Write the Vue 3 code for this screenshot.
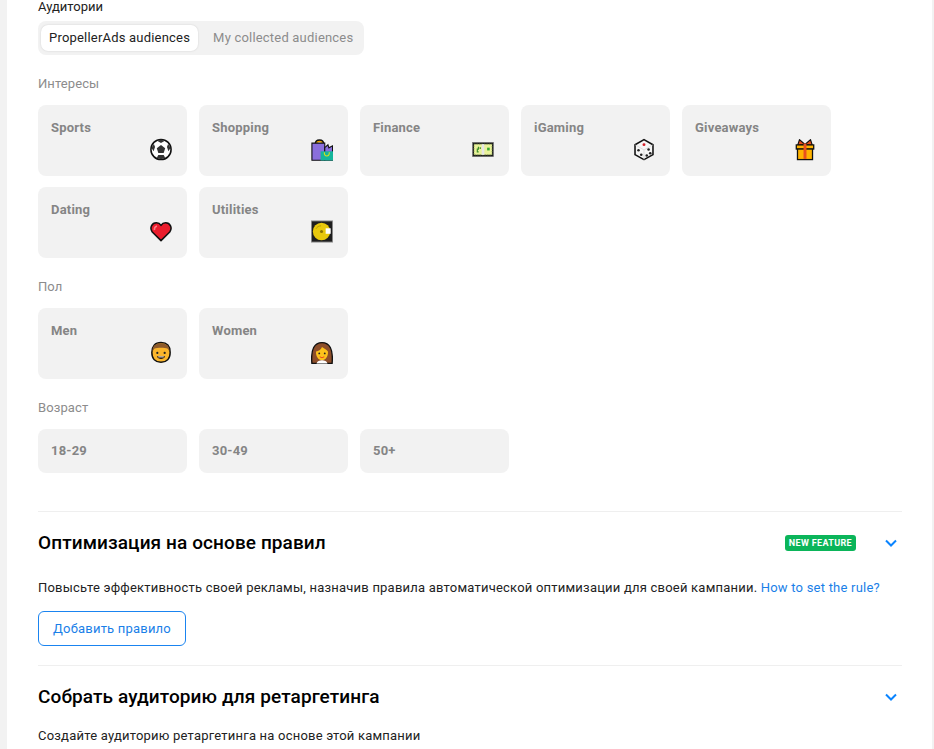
<script setup>
const groups = [
  {
    label: 'Интересы',
    items: [
      { name: 'Sports', icon: 'ball' },
      { name: 'Shopping', icon: 'bag' },
      { name: 'Finance', icon: 'money' },
      { name: 'iGaming', icon: 'dice' },
      { name: 'Giveaways', icon: 'gift' },
      { name: 'Dating', icon: 'heart' },
      { name: 'Utilities', icon: 'disc' },
    ],
  },
  {
    label: 'Пол',
    items: [
      { name: 'Men', icon: 'man' },
      { name: 'Women', icon: 'woman' },
    ],
  },
  {
    label: 'Возраст',
    items: [{ name: '18-29' }, { name: '30-49' }, { name: '50+' }],
  },
]
</script>

<template>
  <div class="page">
    <main class="panel">
      <div class="heading">Аудитории</div>
      <div class="tabs">
        <div class="tab active">PropellerAds audiences</div>
        <div class="tab">My collected audiences</div>
      </div>

      <template v-for="group in groups" :key="group.label">
        <div class="label">{{ group.label }}</div>
        <div class="grid">
          <div v-for="item in group.items" :key="item.name" class="card" :class="{ short: !item.icon }">
            <span class="card-name">{{ item.name }}</span>
            <svg v-if="item.icon" class="emoji" viewBox="0 0 24 24" aria-hidden="true">
              <template v-if="item.icon === 'ball'">
                <circle cx="12" cy="12" r="11" fill="#fff" stroke="#111" stroke-width="1.7" />
                <path d="M12 7.200l4.600 3.300-1.700 5.300H9.100l-1.700-5.300z" fill="#333" />
                <path d="M12 1.200l3.800 1.600L12 4.800 8.200 2.800zM1.500 10l2.800-4 1.200 3.200-1.600 4.800zM22.500 10l-2.800-4-1.200 3.200 1.600 4.800zM7.500 21l1.500-3h6l1.500 3-4.500 1.600z" fill="#333" />
              </template>
              <template v-else-if="item.icon === 'bag'">
                <path d="M5 6C5 .4 13.500 .4 13.500 6" fill="none" stroke="#111" stroke-width="2.200" />
                <path d="M6.200 5.500C6.200 2.300 12.300 2.300 12.300 5.500" fill="none" stroke="#f2a900" stroke-width="1.200" />
                <path d="M1 5h14v18.800H1z" fill="#8a6fdc" stroke="#111" stroke-width="1.200" />
                <path d="M15 10l3.500-3.200 1 3.400 4-2.200v15.800H15z" fill="#8a6fdc" stroke="#111" stroke-width="1.200" />
                <rect x="10.500" y="14" width="13.500" height="10" fill="#14b59b" />
                <path d="M14.500 15c0 5.500 5.500 5.500 5.500 0" fill="none" stroke="#d8e020" stroke-width="1.200" />
              </template>
              <template v-else-if="item.icon === 'money'">
                <rect x=".5" y="4.200" width="23" height="15.600" fill="#1c1c1c" stroke="#777" stroke-width=".6" />
                <rect x="2.200" y="6.200" width="19.600" height="11.600" fill="#e9f29a" />
                <rect x="2.200" y="6.200" width="19.600" height="11.600" fill="none" stroke="#7f9a55" stroke-width=".8" stroke-dasharray="1.500 1.200" />
                <rect x="10.600" y="6.200" width="2.800" height="11.600" fill="#e6e6e6" />
                <path d="M7 9v2.500H5.800v3h1.500M9 9.500v2" fill="none" stroke="#3d8f2a" stroke-width="1.300" />
                <rect x="16.500" y="10" width="2.800" height="3" fill="#35a92e" />
              </template>
              <template v-else-if="item.icon === 'dice'">
                <path d="M12 1.200l9.800 5.600v10.800L12 23 2.200 17.600V6.800z" fill="#f6f6f6" stroke="#111" stroke-width="1.700" stroke-linejoin="round" />
                <path d="M2.500 7L12 12.500 21.500 7M12 12.500V23" fill="none" stroke="#d5d5d5" stroke-width=".8" />
                <circle cx="12" cy="6.700" r="1.600" fill="#d3202a" />
                <circle cx="6" cy="12.800" r="1.400" fill="#222" />
                <circle cx="9" cy="17.800" r="1.400" fill="#222" />
                <circle cx="15" cy="18.600" r="1.400" fill="#222" />
                <circle cx="18.800" cy="16" r="1.400" fill="#222" />
                <circle cx="17" cy="12" r="1.400" fill="#222" />
              </template>
              <template v-else-if="item.icon === 'gift'">
                <path d="M12 6.500L6 1.200 4 7.500zM12 6.500l6-5.300 2 6.300z" fill="#e8501e" stroke="#111" stroke-width="1.300" stroke-linejoin="round" />
                <rect x="2.500" y="7" width="19" height="4.500" fill="#ffb300" stroke="#111" stroke-width="1.400" />
                <rect x="3.800" y="11.500" width="16.400" height="11.500" fill="#ffb300" stroke="#111" stroke-width="1.400" />
                <rect x="10.400" y="5.500" width="3.200" height="16.800" fill="#e8501e" />
              </template>
              <template v-else-if="item.icon === 'heart'">
                <path d="M12 22L2.500 12.500C-.8 8 2 2.500 7 2.500c2.200 0 4 1.200 5 2.800 1-1.600 2.800-2.800 5-2.800 5 0 7.800 5.500 4.500 10z" fill="#ea1c2c" stroke="#111" stroke-width="1.700" stroke-linejoin="round" />
                <path d="M4.800 10.500c-.2-2.200 1-4 2.800-4.500" fill="none" stroke="#ff7d85" stroke-width="1.700" />
              </template>
              <template v-else-if="item.icon === 'disc'">
                <rect x=".5" y=".5" width="23" height="23" fill="#1e1e1e" stroke="#8a8a8a" stroke-width="1" />
                <circle cx="11.500" cy="12" r="9.500" fill="#e8c80c" />
                <circle cx="11.500" cy="12" r="1.700" fill="#8a7400" />
                <path d="M5.500 9c1-2 3-3.200 5.500-3.200" fill="none" stroke="#a89000" stroke-width=".8" />
                <rect x="16" y="8.500" width="5.500" height="6" fill="#fff" />
              </template>
              <template v-else-if="item.icon === 'man'">
                <path d="M12 1.200c6.500 0 10 4 10 10.800s-4 10.700-10 10.700S2 18.800 2 12 5.500 1.200 12 1.200z" fill="#fbb62c" stroke="#111" stroke-width="1.600" />
                <path d="M2.800 11C2.200 5 6.500 2 12 2s9.800 3 9.200 9c-.8-1.300-1-2-1.800-3-3.400-1.500-11.400-1.500-14.800 0-.8 1-1 1.700-1.800 3z" fill="#8d5a2b" />
                <circle cx="8" cy="12.500" r="1.200" fill="#222" />
                <circle cx="16" cy="12.500" r="1.200" fill="#222" />
                <path d="M7.500 16h9c-1 4-8 4-9 0z" fill="#2b1a0c" />
                <path d="M9 16.300h6v1H9z" fill="#fff" />
              </template>
              <template v-else-if="item.icon === 'woman'">
                <path d="M1 24C-.5 8 4 1.200 12 1.200S24.500 8 23 24z" fill="#8d4e2a" stroke="#111" stroke-width="1.500" />
                <path d="M12 6c3 2 5 3 6.500 5 .5 5-2.500 9.500-6.500 9.500S5 16 5.500 11c2.500-.5 5.500-2 6.500-5z" fill="#fcc21b" />
                <path d="M6 24c.5-2.500 3.500-3.500 6-3.500s5.500 1 6 3.500z" fill="#fff" />
                <circle cx="9" cy="13" r="1" fill="#222" />
                <circle cx="15" cy="13" r="1" fill="#222" />
                <path d="M9.500 16.500c1.500 1.300 3.500 1.300 5 0" fill="none" stroke="#e8501e" stroke-width="1.200" />
              </template>
            </svg>
          </div>
        </div>
      </template>

      <section class="section rules">
        <div class="section-head">
          <h2>Оптимизация на основе правил</h2>
          <span class="badge">NEW FEATURE</span>
          <svg class="chevron" viewBox="0 0 14 10" aria-hidden="true">
            <path d="M2 2.500l5 5 5-5" fill="none" stroke="#0a84ff" stroke-width="2" />
          </svg>
        </div>
        <p class="text">
          Повысьте эффективность своей рекламы, назначив правила автоматической оптимизации для своей кампании.
          <span class="link">How to set the rule?</span>
        </p>
        <button class="outline" type="button">Добавить правило</button>
      </section>

      <section class="section retarget">
        <div class="section-head">
          <h2>Собрать аудиторию для ретаргетинга</h2>
          <svg class="chevron" viewBox="0 0 14 10" aria-hidden="true">
            <path d="M2 2.500l5 5 5-5" fill="none" stroke="#0a84ff" stroke-width="2" />
          </svg>
        </div>
        <p class="text">Создайте аудиторию ретаргетинга на основе этой кампании</p>
      </section>
    </main>
  </div>
</template>

<style scoped>
.page {
  height: 749px;
  overflow: hidden;
  background: #f2f2f2;
  padding: 0 2px 0 7px;
  box-sizing: border-box;
  font-family: Roboto, "Noto Sans", sans-serif;
}
.panel {
  height: 749px;
  background: #fff;
  padding: 0 30px 0 31px;
  box-sizing: border-box;
}
.heading {
  font-size: 13px;
  line-height: 13px;
  color: #222;
}
.tabs {
  display: flex;
  width: 326px;
  height: 34px;
  box-sizing: border-box;
  margin-top: 8px;
  padding: 4px 3px;
  background: #f2f2f2;
  border-radius: 8px;
  font-size: 13px;
  letter-spacing: 0.2px;
  white-space: nowrap;
}
.tab {
  display: flex;
  align-items: center;
  padding: 0 8px 2px;
  color: #8c8c8c;
  margin-left: 7px;
}
.tab.active {
  background: #fff;
  color: #222;
  border-radius: 7px;
  margin-left: 0;
  box-shadow: 0 0 2px rgba(0, 0, 0, 0.15);
}
.label {
  font-size: 13px;
  line-height: 15px;
  letter-spacing: 0.1px;
  color: #8c8c8c;
  margin: 21px 0 14px;
}
.grid {
  display: flex;
  flex-wrap: wrap;
  gap: 11px 12px;
}
.card {
  position: relative;
  width: 149px;
  height: 71px;
  box-sizing: border-box;
  padding: 15px 13px;
  background: #f2f2f2;
  border-radius: 8px;
}
.card.short {
  height: 44px;
  padding-top: 14px;
}
.card-name {
  display: block;
  font-size: 13px;
  line-height: 15px;
  font-weight: 700;
  letter-spacing: 0.2px;
  color: #858585;
}
.emoji {
  position: absolute;
  right: 15px;
  bottom: 15px;
  width: 22px;
  height: 23px;
}
.section {
  border-top: 1px solid #efefef;
}
.rules {
  margin-top: 38px;
  height: 154px;
  box-sizing: border-box;
}
.section-head {
  display: flex;
  align-items: center;
  height: 61px;
}
.section-head h2 {
  margin: 0;
  font-size: 19px;
  font-weight: 500;
  color: #000;
  letter-spacing: 0.1px;
  flex: 1;
}
.badge {
  background: #0bb55a;
  color: #fff;
  font-size: 9px;
  font-weight: 700;
  line-height: 16px;
  letter-spacing: 0.35px;
  padding: 0 4px;
  border-radius: 3px;
  margin-right: 28px;
}
.chevron {
  width: 14px;
  height: 10px;
  margin-right: 4px;
}
.text {
  margin: 6px 0 0;
  font-size: 13px;
  line-height: 17px;
  color: #222;
  letter-spacing: 0.215px;
}
.link {
  color: #1a7fe8;
}
.outline {
  display: block;
  width: 148px;
  height: 35px;
  margin-top: 15px;
  background: #fff;
  border: 1px solid #1a84f0;
  border-radius: 6px;
  color: #1a7fe8;
  font: 13px Roboto, sans-serif;
  letter-spacing: 0.2px;
}
.retarget .text {
  margin-top: 0;
}
</style>
